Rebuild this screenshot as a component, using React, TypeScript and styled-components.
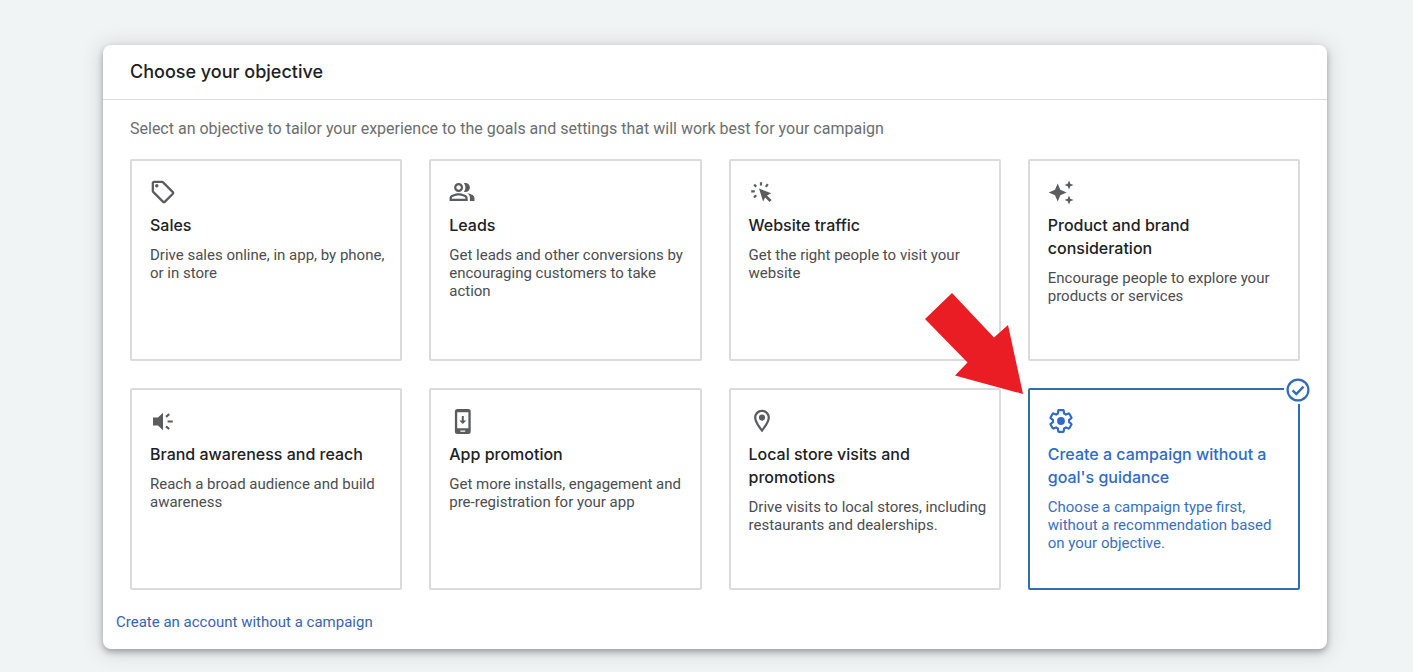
import React, { useState } from "react";
import styled, { createGlobalStyle } from "styled-components";

const GlobalStyle = createGlobalStyle`
  *, *::before, *::after { box-sizing: border-box; }
  body {
    margin: 0;
    background: #f0f4f5;
    font-family: Roboto, "Liberation Sans", sans-serif;
    color: #202124;
  }
`;

const Page = styled.main`
  padding: 45px 86px 23px 103px;
`;

const Panel = styled.section`
  background: #fff;
  border-radius: 8px;
  box-shadow: 0 3px 6px rgba(0, 0, 0, 0.3), 0 2px 20px 4px rgba(0, 0, 0, 0.1);
`;

const PanelHeader = styled.header`
  padding: 15px 27px 16px;
  border-bottom: 1px solid #dadce0;
`;

const PanelTitle = styled.h1`
  margin: 0;
  font: 500 18px/23px Inter, sans-serif;
`;

const PanelBody = styled.div`
  padding: 20px 27px 0;
`;

const Intro = styled.p`
  margin: 0 0 21px;
  font-size: 16px;
  line-height: 18px;
  color: #6b6e70;
`;

const Grid = styled.ul`
  margin: 0;
  padding: 0;
  list-style: none;
  display: grid;
  grid-template-columns: repeat(4, minmax(0, 1fr));
  grid-auto-rows: minmax(202px, auto);
  gap: 27px;
`;

const GridItem = styled.li`
  position: relative;
  display: flex;
`;

const Card = styled.button<{ $selected: boolean }>`
  flex: 1;
  min-width: 0;
  display: flex;
  flex-direction: column;
  align-items: flex-start;
  padding: 18px 10px 18px 18px;
  border: 2px solid ${(p) => (p.$selected ? "#2f70b5" : "#dadbdc")};
  border-radius: 2px;
  background: #fff;
  color: ${(p) => (p.$selected ? "#2f6bc6" : "#5a5c5e")};
  font-family: inherit;
  text-align: left;
  cursor: pointer;
`;

const CardIcon = styled.svg`
  width: 26px;
  height: 26px;
  margin-bottom: 9px;
  fill: currentColor;
`;

const CardTitle = styled.span<{ $selected: boolean }>`
  font: 500 16px/23px Inter, sans-serif;
  color: ${(p) => (p.$selected ? "#2f6bc6" : "#202124")};
`;

const CardText = styled.span<{ $selected: boolean }>`
  margin-top: 9px;
  font-size: 15px;
  line-height: 18px;
  color: ${(p) => (p.$selected ? "#3a6fc0" : "#4b4d4f")};
`;

const SelectedBadge = styled.svg`
  position: absolute;
  top: -12px;
  right: -12px;
  width: 28px;
  height: 28px;
  pointer-events: none;
`;

const Pointer = styled.svg`
  position: absolute;
  top: -95px;
  left: -103px;
  width: 98px;
  height: 101px;
  pointer-events: none;
`;

const PanelFooter = styled.footer`
  padding: 23px 13px 18px;
  line-height: 18px;
`;

const SkipLink = styled.a`
  font-size: 15px;
  color: #3a63b0;
  text-decoration: none;
`;

type IconProps = { viewBox: string; children: React.ReactNode };

const Icon = ({ viewBox, children }: IconProps) => (
  <CardIcon viewBox={viewBox} aria-hidden="true">
    {children}
  </CardIcon>
);

const TagIcon = () => (
  <Icon viewBox="0.5 0.5 23 23">
    <path d="M21.41 11.41l-8.83-8.83c-.37-.37-.88-.58-1.41-.58H4c-1.1 0-2 .9-2 2v7.17c0 .53.21 1.04.59 1.41l8.83 8.83c.78.78 2.05.78 2.83 0l7.17-7.17c.78-.78.78-2.04-.01-2.83zM12.83 20L4 11.17V4h7.17L20 12.83 12.83 20z" />
    <circle cx="6.5" cy="6.5" r="1.5" />
  </Icon>
);

const PeopleIcon = () => (
  <Icon viewBox="0.5 0.5 23 23">
    <path d="M16.67 13.13C18.04 14.06 19 15.32 19 17v3h4v-3c0-2.18-3.57-3.47-6.33-3.87z" />
    <path d="M9 12c2.21 0 4-1.79 4-4s-1.79-4-4-4-4 1.79-4 4 1.79 4 4 4zm0-6c1.1 0 2 .9 2 2s-.9 2-2 2-2-.9-2-2 .9-2 2-2z" />
    <path d="M15 12c2.21 0 4-1.79 4-4s-1.79-4-4-4c-.47 0-.91.1-1.33.24C14.5 5.27 15 6.58 15 8s-.5 2.73-1.33 3.76c.42.14.86.24 1.33.24z" />
    <path d="M9 13c-2.67 0-8 1.34-8 4v3h16v-3c0-2.66-5.33-4-8-4zm6 5H3v-.99C3.2 16.29 6.3 15 9 15s5.8 1.29 6 2v1z" />
  </Icon>
);

const ClickIcon = () => (
  <Icon viewBox="0 0 26 26">
    <path d="M10 9.5l12.3 4.8-4.3 2.2 4.6 4.4-2 2-4.5-4.5-2 4.1z" />
    <path
      d="M12 3.2v3.2M5.2 5.6l2 2.2M18.8 5.2l-2 2.6M2.2 12.4h3.6M5 18.6l2.2-2.4"
      fill="none"
      stroke="currentColor"
      strokeWidth="2.2"
    />
  </Icon>
);

const SparkleIcon = () => (
  <Icon viewBox="0 0 26 26">
    <path d="M9.7 4.5l2.6 6.3 6.3 2.7-6.3 2.7-2.6 6.3-2.7-6.3-6.3-2.7 6.3-2.7z" />
    <path d="M21 1.5l1.3 3.2 3.2 1.3-3.2 1.3-1.3 3.2-1.3-3.2-3.2-1.3 3.2-1.3z" />
    <path d="M21 16.5l1.3 3.2 3.2 1.3-3.2 1.3-1.3 3.2-1.3-3.2-3.2-1.3 3.2-1.3z" />
  </Icon>
);

const SpeakerIcon = () => (
  <Icon viewBox="0 0 26 26">
    <path d="M3 9.500h5l5-4.800v17.600l-5-4.800H3z" />
    <path
      d="M16 8.800l3.200-2.600M17.600 13.500h5.200M16 18.400l3.200 2.600"
      fill="none"
      stroke="currentColor"
      strokeWidth="2.2"
    />
  </Icon>
);

const PhoneIcon = () => (
  <Icon viewBox="0 0 26 26">
    <path
      fillRule="evenodd"
      d="M8.4 1h10.8a2.5 2.5 0 0 1 2.5 2.5v20a2.5 2.5 0 0 1-2.5 2.5H8.4a2.5 2.5 0 0 1-2.5-2.5v-20A2.5 2.5 0 0 1 8.4 1zM8.2 4.2v16h11.2v-16zM11.4 22.5v1.2h4.8v-1.2z"
    />
    <path d="M12.8 8h2v4.4h2.5l-3.500 3.700-3.500-3.700h2.500z" />
  </Icon>
);

const PlaceIcon = () => (
  <Icon viewBox="0.5 0.5 23 23">
    <path d="M12 2C8.13 2 5 5.13 5 9c0 5.25 7 13 7 13s7-7.75 7-13c0-3.87-3.13-7-7-7zM7 9c0-2.76 2.24-5 5-5s5 2.24 5 5c0 2.88-2.88 7.19-5 9.88C9.92 16.21 7 11.85 7 9z" />
    <circle cx="12" cy="9" r="2.7" />
  </Icon>
);

const GearIcon = () => (
  <Icon viewBox="0 0 24 24">
    <path
      d="M19.43 12.98c.04-.32.07-.64.07-.98 0-.34-.03-.66-.07-.98l2.11-1.65c.19-.15.24-.42.12-.64l-2-3.46c-.09-.16-.26-.25-.44-.25-.06 0-.12.01-.17.03l-2.49 1c-.52-.4-1.08-.73-1.69-.98l-.38-2.65C14.46 2.18 14.25 2 14 2h-4c-.25 0-.46.18-.49.42l-.38 2.65c-.61.25-1.17.59-1.69.98l-2.49-1c-.06-.02-.12-.03-.18-.03-.17 0-.34.09-.43.25l-2 3.46c-.13.22-.07.49.12.64l2.11 1.65c-.04.32-.07.65-.07.98 0 .33.03.66.07.98l-2.11 1.65c-.19.15-.24.42-.12.64l2 3.46c.09.16.26.25.44.25.06 0 .12-.01.17-.03l2.49-1c.52.4 1.08.73 1.69.98l.38 2.65c.03.24.24.42.49.42h4c.25 0 .46-.18.49-.42l.38-2.65c.61-.25 1.17-.59 1.69-.98l2.49 1c.06.02.12.03.18.03.17 0 .34-.09.43-.25l2-3.46c.12-.22.07-.49-.12-.64l-2.11-1.65z"
      fill="none"
      stroke="currentColor"
      strokeWidth="2"
    />
    <circle cx="12" cy="12" r="3.6" />
  </Icon>
);

const objectives = [
  { id: "sales", icon: TagIcon, title: "Sales", text: "Drive sales online, in app, by phone, or in store" },
  {
    id: "leads",
    icon: PeopleIcon,
    title: "Leads",
    text: "Get leads and other conversions by encouraging customers to take action",
  },
  { id: "traffic", icon: ClickIcon, title: "Website traffic", text: "Get the right people to visit your website" },
  {
    id: "consideration",
    icon: SparkleIcon,
    title: "Product and brand consideration",
    text: "Encourage people to explore your products or services",
  },
  {
    id: "awareness",
    icon: SpeakerIcon,
    title: "Brand awareness and reach",
    text: "Reach a broad audience and build awareness",
  },
  {
    id: "app",
    icon: PhoneIcon,
    title: "App promotion",
    text: "Get more installs, engagement and pre-registration for your app",
  },
  {
    id: "local",
    icon: PlaceIcon,
    title: "Local store visits and promotions",
    text: "Drive visits to local stores, including restaurants and dealerships.",
  },
  {
    id: "none",
    icon: GearIcon,
    title: "Create a campaign without a goal's guidance",
    text: "Choose a campaign type first, without a recommendation based on your objective.",
  },
];

const CheckBadge = () => (
  <SelectedBadge viewBox="0 0 28 28" aria-hidden="true">
    <circle cx="14" cy="14" r="14" fill="#fff" />
    <circle cx="14" cy="14" r="10.4" fill="none" stroke="#2f6bb8" strokeWidth="2.2" />
    <path d="M8.6 14.3l3.7 3.7 7.2-7.4" fill="none" stroke="#2f6bb8" strokeWidth="2.4" />
  </SelectedBadge>
);

const RedArrow = () => (
  <Pointer viewBox="0 0 98 101" aria-hidden="true">
    <path d="M27 0L69 44.5 83 32 98 101 30 82.5 42.5 69.5 0 26z" fill="#ea1c24" />
  </Pointer>
);

export default function App() {
  const [selected, setSelected] = useState("none");

  return (
    <>
      <GlobalStyle />
      <Page>
        <Panel aria-labelledby="objective-title">
          <PanelHeader>
            <PanelTitle id="objective-title">Choose your objective</PanelTitle>
          </PanelHeader>
          <PanelBody>
            <Intro>
              Select an objective to tailor your experience to the goals and settings that will work best for your
              campaign
            </Intro>
            <Grid>
              {objectives.map(({ id, icon: ObjectiveIcon, title, text }) => {
                const active = id === selected;
                return (
                  <GridItem key={id}>
                    <Card type="button" $selected={active} aria-pressed={active} onClick={() => setSelected(id)}>
                      <ObjectiveIcon />
                      <CardTitle $selected={active}>{title}</CardTitle>
                      <CardText $selected={active}>{text}</CardText>
                    </Card>
                    {active && <CheckBadge />}
                    {id === "none" && <RedArrow />}
                  </GridItem>
                );
              })}
            </Grid>
          </PanelBody>
          <PanelFooter>
            <SkipLink href="#account">Create an account without a campaign</SkipLink>
          </PanelFooter>
        </Panel>
      </Page>
    </>
  );
}
